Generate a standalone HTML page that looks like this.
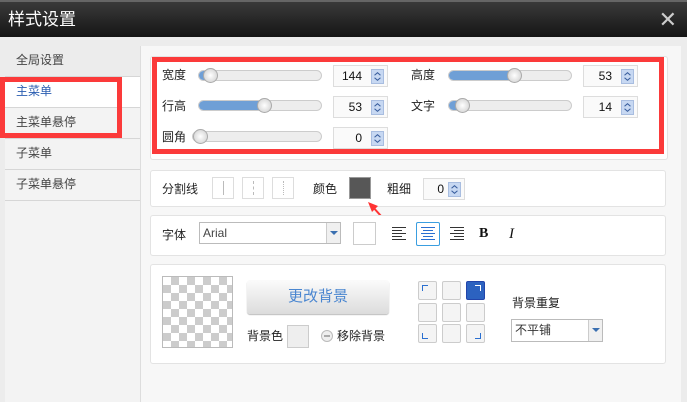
<!DOCTYPE html><html><head><meta charset="utf-8"><style>
*{box-sizing:border-box;margin:0;padding:0}
body{width:687px;height:402px;overflow:hidden;background:#ececec;font-family:"Liberation Sans","Noto Sans CJK SC",sans-serif;font-size:12px;color:#333;position:relative}
.a{position:absolute}
.title{left:0;top:0;width:687px;height:37px;background:linear-gradient(#3a3a3a,#151515);color:#fff;font-size:17px;line-height:35px;padding-left:8px;border-top:2px solid #666}
.side{left:5px;top:46px;width:136px;height:356px;background:#f3f3f3;border-right:1px solid #ddd}
.it{position:absolute;left:0;width:135px;height:31px;line-height:29px;padding-left:11px;border-bottom:1px solid #d6d6d6;font-size:12px;color:#444}
.main{left:141px;top:46px;width:540px;height:356px;background:#f7f7f7}
.pan{position:absolute;background:#fff;border:1px solid #e3e3e3;border-radius:3px}
.red{position:absolute;border:5px solid #fb3a3a}
.lbl{position:absolute;font-size:12px;line-height:12px;color:#222}
.tr{position:absolute;height:11px;border-radius:6px;background:#ededed;border:1px solid #ccc}
.fill{position:absolute;left:0;top:0;height:9px;border-radius:5px;background:#6f9fd6}
.kn{position:absolute;width:15px;height:15px;border-radius:50%;background:radial-gradient(#fff,#ccc);border:1px solid #aaa;top:-3px}
.num{position:absolute;width:55px;height:22px;border:1px solid #ddd;background:#fafafa;text-align:right;padding-right:25px;line-height:20px;font-size:12px;color:#111}
.sp{position:absolute;right:3px;top:3px;width:13px;height:15px;background:#c7d8f2;border:1px solid #a8bde0}
.sq{position:absolute;width:22px;height:22px;border:1px solid #ddd;background:#fff}
.g{position:absolute;width:19px;height:19px;border:1px solid #ccc;background:#f4f4f4;border-radius:2px}
</style></head><body>
<svg width="0" height="0" style="position:absolute"><defs><symbol id="ar" viewBox="0 0 13 15"><path d="M3 6L6.5 3L10 6M3 9L6.5 12L10 9" stroke="#3a5f9e" stroke-width="1.3" fill="none"/></symbol></defs></svg>
<div class="a title">样式设置<span style="position:absolute;right:10px;top:0;font-size:22px;color:#ccc">✕</span></div>
<div class="a side">
<div class="it" style="top:0;background:#ececec">全局设置</div>
<div class="it" style="top:31px;background:#fff;color:#2a5db0">主菜单</div>
<div class="it" style="top:62px">主菜单悬停</div>
<div class="it" style="top:93px">子菜单</div>
<div class="it" style="top:124px">子菜单悬停</div>
</div>
<div class="a main"></div>
<div class="pan" style="left:150px;top:56px;width:518px;height:104px"></div>
<div class="red" style="left:152px;top:57px;width:512px;height:97px"></div>
<div class="lbl" style="left:162px;top:69px">宽度</div>
<div class="tr" style="left:198px;top:70px;width:124px"><div class="fill" style="width:12px"></div><div class="kn" style="left:4px"></div></div>
<div class="num" style="left:333px;top:65px">144<svg class="sp"><use href="#ar"/></svg></div>
<div class="lbl" style="left:411px;top:69px">高度</div>
<div class="tr" style="left:448px;top:70px;width:124px"><div class="fill" style="width:65px"></div><div class="kn" style="left:58px"></div></div>
<div class="num" style="left:583px;top:65px">53<svg class="sp"><use href="#ar"/></svg></div>
<div class="lbl" style="left:162px;top:100px">行高</div>
<div class="tr" style="left:198px;top:100px;width:124px"><div class="fill" style="width:65px"></div><div class="kn" style="left:58px"></div></div>
<div class="num" style="left:333px;top:96px">53<svg class="sp"><use href="#ar"/></svg></div>
<div class="lbl" style="left:411px;top:100px">文字</div>
<div class="tr" style="left:448px;top:100px;width:124px"><div class="fill" style="width:14px"></div><div class="kn" style="left:6px"></div></div>
<div class="num" style="left:583px;top:96px">14<svg class="sp"><use href="#ar"/></svg></div>
<div class="lbl" style="left:162px;top:131px">圆角</div>
<div class="tr" style="left:192px;top:131px;width:130px"><div class="kn" style="left:0"></div></div>
<div class="num" style="left:333px;top:127px">0<svg class="sp"><use href="#ar"/></svg></div>
<div class="pan" style="left:150px;top:170px;width:516px;height:37px"></div>
<div class="lbl" style="left:162px;top:183px">分割线</div>
<div class="sq" style="left:212px;top:177px"><div class="a" style="left:10px;top:3px;height:14px;border-left:1px solid #bbb"></div></div>
<div class="sq" style="left:242px;top:177px"><div class="a" style="left:10px;top:3px;height:14px;border-left:1px dashed #bbb"></div></div>
<div class="sq" style="left:272px;top:177px"><div class="a" style="left:10px;top:3px;height:14px;border-left:1px dotted #bbb"></div></div>
<div class="lbl" style="left:313px;top:183px">颜色</div>
<div class="a" style="left:349px;top:177px;width:22px;height:22px;background:#575757;border:1px solid #999"></div>
<div class="lbl" style="left:387px;top:183px">粗细</div>
<div class="num" style="left:423px;top:178px;width:42px;padding-right:20px">0<svg class="sp"><use href="#ar"/></svg></div>
<svg class="a" style="left:364px;top:200px" width="30" height="30"><path d="M26 26L8 6" stroke="#f33" stroke-width="2"/><path d="M4 2L14 6L8 12Z" fill="#f33"/></svg>
<div class="pan" style="left:150px;top:215px;width:516px;height:41px"></div>
<div class="lbl" style="left:162px;top:229px">字体</div>
<div class="a" style="left:199px;top:222px;width:142px;height:22px;border:1px solid #bbb;background:#fff;padding-left:3px;line-height:20px;color:#444">Arial<div class="a" style="right:0;top:0;width:14px;height:20px;border-left:1px solid #ccc;background:#f0f0f0"><div class="a" style="left:3px;top:8px;border:4px solid transparent;border-top:4px solid #3a6fb0"></div></div></div>
<div class="a" style="left:353px;top:222px;width:23px;height:23px;border:1px solid #ccc;background:#fff"></div>
<svg class="a" style="left:392px;top:227px" width="14" height="13"><path d="M0 .5H14M0 3.5H10M0 6.5H14M0 9.5H10M0 12.5H14" stroke="#333"/></svg>
<div class="a" style="left:416px;top:222px;width:24px;height:24px;border:1px solid #3a9ee0;border-radius:2px"><svg class="a" style="left:4px;top:4px" width="14" height="13"><path d="M0 .5H14M2 3.5H12M0 6.5H14M2 9.5H12M0 12.5H14" stroke="#2a6fd0"/></svg></div>
<svg class="a" style="left:450px;top:227px" width="14" height="13"><path d="M0 .5H14M4 3.5H14M0 6.5H14M4 9.5H14M0 12.5H14" stroke="#333"/></svg>
<div class="a" style="left:479px;top:227px;font:bold 14px/14px 'Liberation Serif',serif;color:#111">B</div>
<div class="a" style="left:509px;top:227px;font:italic 15px/14px 'Liberation Serif',serif;color:#111">I</div>
<div class="pan" style="left:150px;top:264px;width:516px;height:100px"></div>
<div class="a" style="left:162px;top:276px;width:71px;height:72px;border:1px solid #bbb;background-color:#fff;background-image:linear-gradient(45deg,#ccc 25%,transparent 25%,transparent 75%,#ccc 75%),linear-gradient(45deg,#ccc 25%,transparent 25%,transparent 75%,#ccc 75%);background-size:16px 16px;background-position:0 0,8px 8px"></div>
<div class="a" style="left:247px;top:280px;width:142px;height:34px;border-radius:3px;background:linear-gradient(#fbfbfb,#dcdcdc);box-shadow:0 1px 1px #bbb;color:#4a86d0;font-size:15px;text-align:center;line-height:34px">更改背景</div>
<div class="lbl" style="left:247px;top:330px">背景色</div>
<div class="a" style="left:287px;top:325px;width:22px;height:23px;border:1px solid #ccc;background:#eee"></div>
<div class="a" style="left:321px;top:330px;width:12px;height:12px;border-radius:50%;border:1px solid #bbb;background:#eee"><div class="a" style="left:2px;top:4px;width:6px;height:2px;background:#aaa"></div></div>
<div class="lbl" style="left:337px;top:330px">移除背景</div>
<div class="g" style="left:418px;top:281px"><div class="a" style="left:3px;top:3px;width:6px;height:6px;border-left:1px solid #2a6fd0;border-top:1px solid #2a6fd0"></div></div>
<div class="g" style="left:442px;top:281px"></div>
<div class="g" style="left:466px;top:281px;background:#2c62c0;border-color:#24a"><div class="a" style="right:3px;top:3px;width:6px;height:6px;border-right:1px solid #fff;border-top:1px solid #fff"></div></div>
<div class="g" style="left:418px;top:303px"></div>
<div class="g" style="left:442px;top:303px"></div>
<div class="g" style="left:466px;top:303px"></div>
<div class="g" style="left:418px;top:324px"><div class="a" style="left:3px;bottom:3px;width:6px;height:6px;border-left:1px solid #2a6fd0;border-bottom:1px solid #2a6fd0"></div></div>
<div class="g" style="left:442px;top:324px"></div>
<div class="g" style="left:466px;top:324px"><div class="a" style="right:3px;bottom:3px;width:6px;height:6px;border-right:1px solid #2a6fd0;border-bottom:1px solid #2a6fd0"></div></div>
<div class="lbl" style="left:512px;top:297px">背景重复</div>
<div class="a" style="left:511px;top:319px;width:92px;height:23px;border:1px solid #bbb;background:#fff;padding-left:3px;line-height:21px;color:#333">不平铺<div class="a" style="right:0;top:0;width:14px;height:21px;border-left:1px solid #ccc;background:#f0f0f0"><div class="a" style="left:3px;top:8px;border:4px solid transparent;border-top:4px solid #3a6fb0"></div></div></div>
<div class="red" style="left:0;top:77px;width:122px;height:61px"></div>
</body></html>
